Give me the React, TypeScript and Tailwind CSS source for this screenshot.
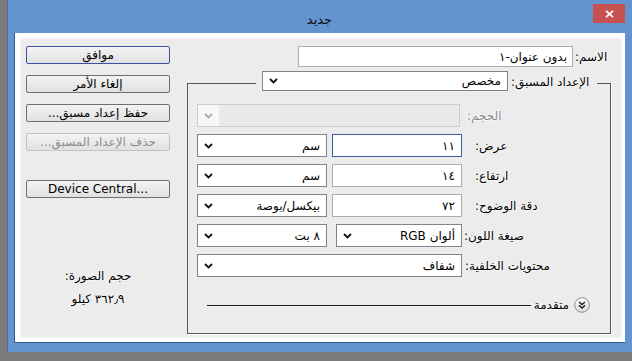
import React from 'react';

const glow = '[text-shadow:0_0_3px_#fff,0_0_2px_#fff,0_0_1px_#fff]';

// Arabic label: right-to-left text, colon ends up next to the field on its left
function Label({ children, className = '' }: { children: React.ReactNode; className?: string }) {
  return (
    <span dir="rtl" className={`whitespace-nowrap ${glow} ${className}`}>
      {children}
    </span>
  );
}

function Chevron({ muted = false }: { muted?: boolean }) {
  return (
    <svg width="9" height="6" viewBox="0 0 9 6" className="shrink-0">
      <path d="M1 1l3.5 3.5L8 1" fill="none" stroke={muted ? '#a8a8a8' : '#111'} strokeWidth="1.8" />
    </svg>
  );
}

function Select({ value, className = '' }: { value: string; className?: string }) {
  return (
    <div className={`flex h-full items-center border border-[#7f848c] bg-white pl-[6px] pr-[6px] ${className}`}>
      <Chevron />
      <span dir="rtl" className="flex-1 truncate text-right">{value}</span>
    </div>
  );
}

function NumField({ value, focused = false }: { value: string; focused?: boolean }) {
  return (
    <input
      readOnly
      dir="rtl"
      value={value}
      className={`h-full w-[130px] border bg-white pr-[6px] text-right outline-none ${
        focused ? 'border-[#3a5f9f]' : 'border-[#abadb3]'
      }`}
    />
  );
}

function Btn({ children, primary = false, disabled = false, className = '' }: { children: React.ReactNode; primary?: boolean; disabled?: boolean; className?: string }) {
  return (
    <button
      type="button"
      disabled={disabled}
      className={`flex h-[18px] w-full items-center justify-center rounded-[2px] border bg-linear-to-b from-[#f3f3f3] to-[#e1e1e1] leading-none ${
        primary ? 'border-[#3c4ea2]' : disabled ? 'border-[#c3c3c3] text-[#8d8d8d]' : 'border-[#6f6f6f]'
      } ${className}`}
    >
      {children}
    </button>
  );
}

export default function App() {
  return (
    <div className="flex h-[361px] w-[632px] bg-[#7c7c7c] pb-[9px] pl-[7px] font-['DejaVu_Sans',sans-serif] text-[12px] text-black">
      <div className="flex flex-1 flex-col border-l border-[#4b6d9c] bg-[#6394cf] pb-[9px] pl-[6px] pr-[7px]">
        {/* title bar */}
        <div className="flex h-[33px] shrink-0">
          <div className="flex-1" />
          <div className="pt-[13px] text-[13px] leading-none text-[#111]">جديد</div>
          <div className="flex flex-1 justify-end">
            <div className="mt-[4px] flex h-[19px] w-[32px] items-center justify-center bg-[#c75050]">
              <svg width="9" height="8" viewBox="0 0 9 8">
                <path d="M1 0.8l7 6.4M8 0.8l-7 6.4" stroke="#fff" strokeWidth="1.8" />
              </svg>
            </div>
          </div>
        </div>

        {/* client area */}
        <div className="border-b border-l border-[#2f5b92] bg-white pb-[4px] pl-[5px] pr-[3px] pt-[5px]">
          <div className="flex h-[300px] gap-[17px] bg-[#ececec] px-[6px] shadow-[inset_0_0_3px_#fff]">
            {/* buttons column */}
            <div className="flex w-[144px] shrink-0 flex-col items-center pt-[8px]">
              <Btn primary>موافق</Btn>
              <Btn className="mt-[11px]">إلغاء الأمر</Btn>
              <Btn className="mt-[11px]">
                <span dir="rtl">حفظ إعداد مسبق...</span>
              </Btn>
              <Btn className="mt-[11px]" disabled>
                <span dir="rtl">حذف الإعداد المسبق...</span>
              </Btn>
              <Btn className="mt-[29px]">Device Central...</Btn>
              <Label className="mt-[71px] leading-[14px]">حجم الصورة:</Label>
              <Label className="mt-[9px] leading-[14px]">٣٦٢٫٩ كيلو</Label>
            </div>

            {/* form column */}
            <div className="flex w-[429px] shrink-0 flex-col">
              <div className="mt-[8px] flex h-[21px] items-center justify-end">
                <input readOnly dir="rtl" value="بدون عنوان-١" className="h-full w-[275px] border border-[#abadb3] bg-white pr-[5px] text-right outline-none" />
                <Label className="ml-[2px] w-[41px] text-left">الاسم:</Label>
              </div>

              <fieldset className="mt-[3px] w-[424px] border border-[#555] pb-[20px] pl-[9px] pr-[13px] pt-[8px] shadow-[1px_1px_0_#fff]">
                <legend className="ml-auto flex items-center pb-[5px] pl-[6px]">
                  <Select value="مخصص" className="h-[19px] w-[246px]" />
                  <Label className="ml-[3px] w-[86px] pt-[3px] text-left">الإعداد المسبق:</Label>
                </legend>

                <div className="flex flex-col gap-[7px]">
                  <div className="flex h-[23px] items-center">
                    <div className="flex h-full w-[263px] items-center border border-[#cdcdcd] bg-[#e9e9e9]">
                      <div className="flex h-full w-[21px] items-center justify-center bg-[#f7f7f7]">
                        <Chevron muted />
                      </div>
                    </div>
                    <Label className="ml-[7px] text-[#8a8a8a]">الحجم:</Label>
                  </div>

                  <div className="flex h-[23px] items-center">
                    <Select value="سم" className="w-[130px]" />
                    <div className="ml-[5px] h-full">
                      <NumField value="١١" focused />
                    </div>
                    <Label className="ml-[13px]">عرض:</Label>
                  </div>

                  <div className="flex h-[23px] items-center">
                    <Select value="سم" className="w-[130px]" />
                    <div className="ml-[5px] h-full">
                      <NumField value="١٤" />
                    </div>
                    <Label className="ml-[13px]">ارتفاع:</Label>
                  </div>

                  <div className="flex h-[23px] items-center">
                    <Select value="بيكسل/بوصة" className="w-[130px]" />
                    <div className="ml-[5px] h-full">
                      <NumField value="٧٢" />
                    </div>
                    <Label className="ml-[13px]">دقة الوضوح:</Label>
                  </div>

                  <div className="flex h-[23px] items-center">
                    <Select value="٨ بت" className="w-[130px]" />
                    <Select value="ألوان RGB" className="ml-[9px] w-[126px]" />
                    <Label className="ml-[2px]">صيغة اللون:</Label>
                  </div>

                  <div className="flex h-[23px] items-center">
                    <Select value="شفاف" className="w-[265px]" />
                    <Label className="ml-[3px]">محتويات الخلفية:</Label>
                  </div>
                </div>

                <div className="mt-[20px] flex h-[16px] items-center pl-[10px] pr-[7px]">
                  <div className="h-px flex-1 bg-[#1e1e1e]" />
                  <Label className="ml-[3px]">متقدمة</Label>
                  <svg width="16" height="16" viewBox="0 0 16 16" className="ml-[5px] shrink-0">
                    <defs>
                      <linearGradient id="adv" x1="0" y1="0" x2="0" y2="1">
                        <stop offset="0" stopColor="#ffffff" />
                        <stop offset="1" stopColor="#dcdcdc" />
                      </linearGradient>
                    </defs>
                    <circle cx="8" cy="8" r="7.3" fill="url(#adv)" stroke="#8c8c8c" />
                    <path d="M5 5l3 2.6 3-2.6M5 8.4l3 2.6 3-2.6" fill="none" stroke="#222" strokeWidth="1.4" />
                  </svg>
                </div>
              </fieldset>
            </div>
          </div>
        </div>
      </div>
    </div>
  );
}
